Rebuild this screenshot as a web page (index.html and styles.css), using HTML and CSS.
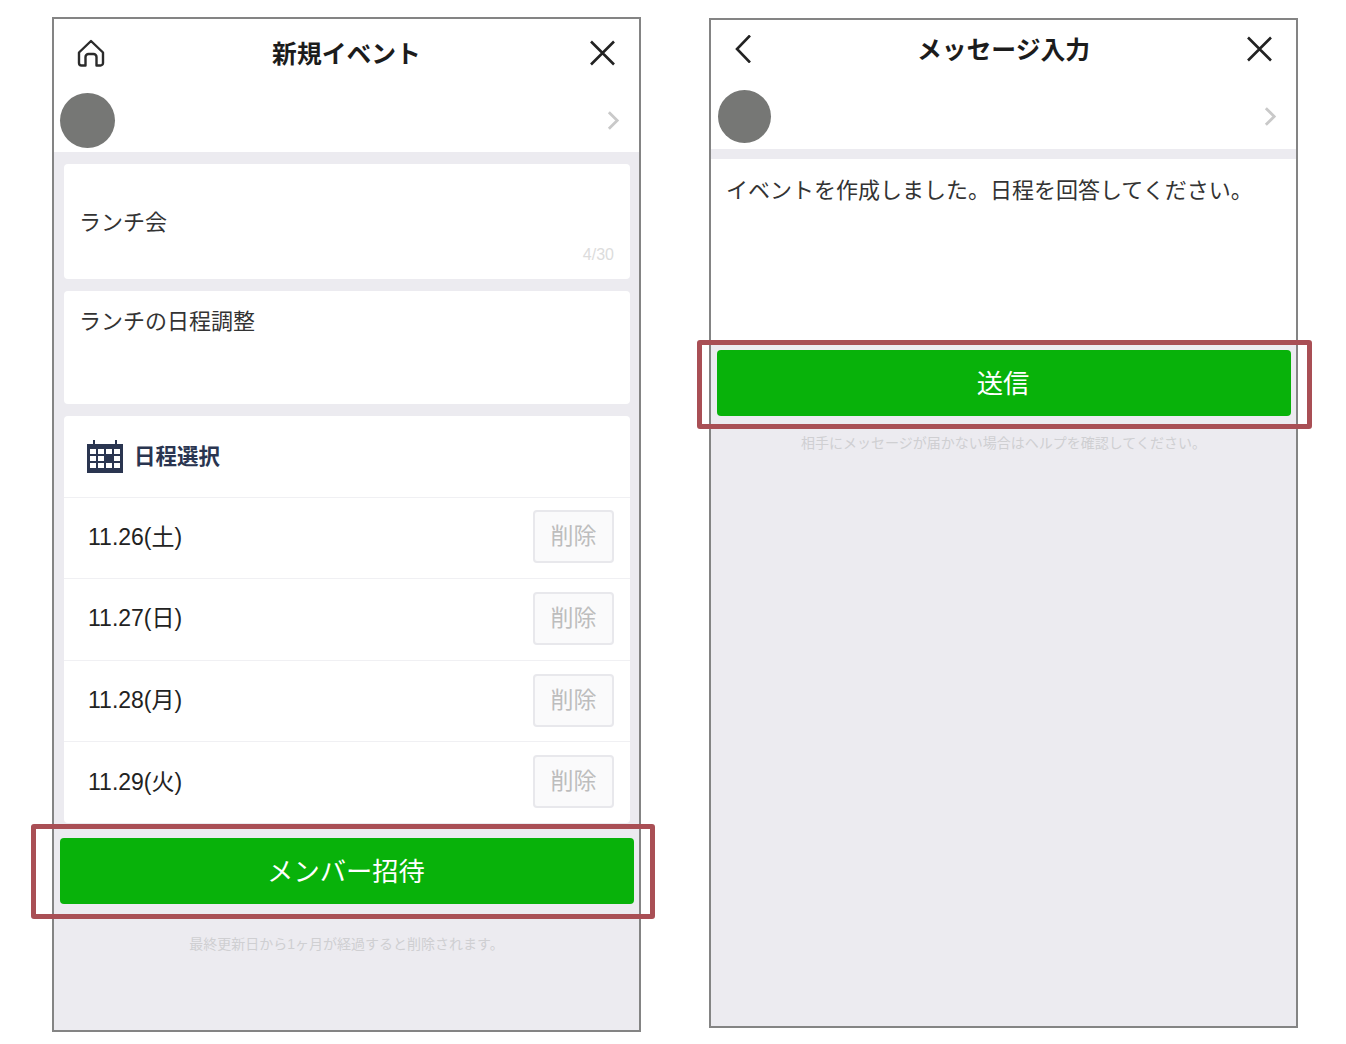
FILE: index.html
```html
<!DOCTYPE html>
<html lang="ja">
<head>
  <meta charset="UTF-8">
  <meta name="viewport" content="width=device-width, initial-scale=1.0">
  <title>新規イベント</title>
  <link rel="stylesheet" href="styles.css">
</head>
<body>
  <div class="screens">
    <!-- left phone -->
    <section class="phone phone-event">
      <header class="topbar">
        <svg class="icon" viewBox="0 0 28 28" fill="none" stroke="#2b2b2b" stroke-width="2.4" stroke-linejoin="round" stroke-linecap="round">
          <path d="M2 13.5 14 2l12 11.5V24a2.5 2.5 0 0 1-2.5 2.5H19.5V18a3 3 0 0 0-3-3h-5a3 3 0 0 0-3 3v8.5H4.5A2.5 2.5 0 0 1 2 24z"/>
        </svg>
        <h1 class="title">新規イベント</h1>
        <svg class="icon" viewBox="0 0 28 28" fill="none" stroke="#222" stroke-width="2.6">
          <path d="M3 2.5 26 25.5M26 2.5 3 25.5"/>
        </svg>
      </header>
      <div class="profile">
        <div class="avatar"></div>
        <svg class="chevron" viewBox="0 0 14 22" fill="none" stroke="#c9c9c9" stroke-width="3">
          <path d="M2 2l9 9-9 9"/>
        </svg>
      </div>
      <div class="body">
        <div class="card card-name">
          <p class="field-text">ランチ会</p>
          <span class="counter">4/30</span>
        </div>
        <div class="card card-memo">
          <p class="field-text">ランチの日程調整</p>
        </div>
        <div class="card card-dates">
          <div class="dates-head">
            <svg class="calendar" viewBox="0 0 36 33">
              <path fill="#2a3550" d="M0 4h6V0h2v4h20V0h2v4h6v29H0z"/>
              <g fill="#fff">
                <rect x="3" y="9" width="6" height="5"/><rect x="11" y="9" width="6" height="5"/><rect x="19" y="9" width="6" height="5"/><rect x="27" y="9" width="6" height="5"/>
                <rect x="3" y="16" width="6" height="5"/><rect x="11" y="16" width="6" height="5"/><rect x="27" y="16" width="6" height="5"/>
                <rect x="3" y="23" width="6" height="5"/><rect x="11" y="23" width="6" height="5"/><rect x="19" y="23" width="6" height="5"/><rect x="27" y="23" width="6" height="5"/>
              </g>
            </svg>
            <span class="dates-title">日程選択</span>
          </div>
          <div class="date-row"><span class="date">11.26(土)</span><button class="delete">削除</button></div>
          <div class="date-row"><span class="date">11.27(日)</span><button class="delete">削除</button></div>
          <div class="date-row"><span class="date">11.28(月)</span><button class="delete">削除</button></div>
          <div class="date-row"><span class="date">11.29(火)</span><button class="delete">削除</button></div>
        </div>
        <div class="action action-event">
          <button class="send">メンバー招待</button>
          <div class="highlight"></div>
        </div>
        <p class="note note-event">最終更新日から1ヶ月が経過すると削除されます。</p>
      </div>
    </section>

    <!-- right phone -->
    <section class="phone phone-message">
      <header class="topbar">
        <svg class="icon" viewBox="0 0 28 28" fill="none" stroke="#222" stroke-width="2.6">
          <path d="M16 0.5 3 14l13 13.500"/>
        </svg>
        <h1 class="title">メッセージ入力</h1>
        <svg class="icon" viewBox="0 0 28 28" fill="none" stroke="#222" stroke-width="2.6">
          <path d="M3 2.5 26 25.5M26 2.5 3 25.5"/>
        </svg>
      </header>
      <div class="profile">
        <div class="avatar"></div>
        <svg class="chevron" viewBox="0 0 14 22" fill="none" stroke="#c9c9c9" stroke-width="3">
          <path d="M2 2l9 9-9 9"/>
        </svg>
      </div>
      <div class="body">
        <div class="message">
          <p class="message-text">イベントを作成しました。日程を回答してください。</p>
        </div>
        <div class="action action-message">
          <button class="send">送信</button>
          <div class="highlight"></div>
        </div>
        <p class="note note-message">相手にメッセージが届かない場合はヘルプを確認してください。</p>
      </div>
    </section>
  </div>
</body>
</html>
```

FILE: styles.css
```css
html, body {
  margin: 0;
  padding: 0;
  background-color: white;
}
body {
  font-family: "Liberation Sans", "Noto Sans CJK JP", sans-serif;
  color: #222;
}
p, h1 {
  margin: 0;
}
.screens {
  display: flex;
  gap: 68px;
  align-items: flex-start;
  padding: 17px 0 0 52px;
}
.phone {
  display: flex;
  flex-direction: column;
  width: 589px;
  box-sizing: border-box;
  border: 2px solid #848484;
  background-color: #ecebf0;
}
.phone-event {
  height: 1015px;
}
.phone-message {
  height: 1010px;
  margin-top: 1px;
}
.topbar {
  display: flex;
  justify-content: space-between;
  align-items: center;
  padding: 0 23px;
  background: white;
}
.phone-event .topbar {
  height: 68px;
}
.phone-message .topbar {
  height: 58px;
}
.icon {
  width: 28px;
  height: 28px;
}
.title {
  padding-bottom: 3px;
  font-size: 24.800px;
  font-weight: bold;
  color: #1c1c1c;
}
.profile {
  display: flex;
  justify-content: space-between;
  align-items: center;
  background: white;
  box-sizing: border-box;
  padding: 2px 19px 0 6px;
}
.phone-event .profile {
  height: 65px;
}
.phone-message .profile {
  height: 71px;
  padding: 6px 19px 0 7px;
}
.avatar {
  width: 55px;
  height: 55px;
  border-radius: 50%;
  background-color: #767775;
}
.phone-message .avatar {
  width: 53px;
  height: 53px;
}
.chevron {
  width: 13px;
  height: 21px;
}
.body {
  flex: 1;
}
.phone-event .body {
  padding-top: 12px;
}
.phone-message .body {
  padding-top: 10px;
}
.card {
  margin: 0 9px 12px 10px;
  background: white;
  border-radius: 4px;
}
.card-name {
  display: flex;
  flex-direction: column;
  height: 115px;
  box-sizing: border-box;
  padding: 44px 16px 0 15px;
}
.card-memo {
  height: 113px;
  box-sizing: border-box;
  padding: 16px 16px 0 15px;
}
.field-text {
  font-size: 22px;
  line-height: 30px;
  color: #333;
}
.counter {
  align-self: flex-end;
  margin-top: 8px;
  font-size: 16px;
  color: #dcdcdc;
}
.card-dates {
  height: 407px;
  display: flex;
  flex-direction: column;
  margin-bottom: 15px;
}
.dates-head {
  display: flex;
  align-items: center;
  gap: 11px;
  height: 80.500px;
  flex: none;
  padding-left: 23px;
}
.calendar {
  width: 36px;
  height: 33px;
}
.dates-title {
  padding-bottom: 4px;
  font-size: 21.500px;
  font-weight: bold;
  color: #2a3550;
}
.date-row {
  flex: 1;
  display: flex;
  justify-content: space-between;
  align-items: center;
  padding: 0 16px 2px 24px;
  border-top: 1.500px solid #f0f0f3;
}
.date {
  padding-bottom: 4px;
  font-size: 23px;
  color: #222;
}
.delete {
  width: 81px;
  height: 53px;
  padding: 0 0 5px;
  font-family: inherit;
  font-size: 23px;
  color: #bdbdbd;
  background-color: #fafafb;
  border: 2px solid #e8e8ec;
  border-radius: 4px;
}
.action {
  position: relative;
  margin: 0 5px 0 6px;
}
.send {
  display: block;
  width: 100%;
  height: 66px;
  padding: 0 2px 4px 0;
  font-family: inherit;
  font-size: 26.300px;
  color: white;
  background-color: #08b20a;
  border: none;
  border-radius: 4px;
}
.highlight {
  position: absolute;
  box-sizing: border-box;
  border: 5px solid #a94f55;
  border-radius: 3px;
}
.action-event .highlight {
  top: -14px;
  bottom: -15px;
  left: -29px;
  right: -21px;
}
.action-message .highlight {
  top: -10px;
  bottom: -13px;
  left: -20px;
  right: -21px;
}
.note {
  font-size: 14px;
  line-height: 20px;
  color: #cfcfd2;
  text-align: center;
}
.note-event {
  margin-top: 30px;
}
.note-message {
  margin-top: 17px;
}
.message {
  height: 186px;
  margin-bottom: 5px;
  background: white;
  box-sizing: border-box;
  padding: 17px 15px 0;
}
.message-text {
  font-size: 22px;
  line-height: 30px;
  color: #333;
}
```
